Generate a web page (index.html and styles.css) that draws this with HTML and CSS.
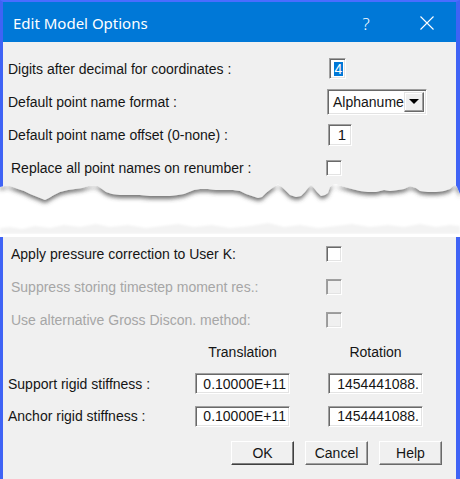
FILE: index.html
```html
<!DOCTYPE html>
<html lang="en">
  <head>
    <meta charset="UTF-8" />
    <title>Edit Model Options</title>
    <link rel="stylesheet" href="styles.css">
  </head>
  <body>
    <div class="frame frame-top">
      <div class="titlebar">
        <span class="title">Edit Model Options</span>
        <span class="help">?</span>
        <svg class="close" width="14" height="14" viewBox="0 0 14 14">
          <path d="M0.5 0.5L13.5 13.5M13.5 0.5L0.5 13.5" stroke="#fff" stroke-width="1.1" fill="none" />
        </svg>
      </div>

      <div class="body body-top">
        <div class="row">
          <span class="label">Digits after decimal for coordinates :</span>
          <span class="field digits"><span class="selected">4</span></span>
        </div>
        <div class="row">
          <span class="label">Default point name format :</span>
          <span class="field combo">
            <span class="combo-text">Alphanume</span>
            <span class="combo-btn"><span class="arrow"></span></span>
          </span>
        </div>
        <div class="row">
          <span class="label">Default point name offset (0-none) :</span>
          <span class="field offset">1</span>
        </div>
        <div class="row">
          <span class="label indent">Replace all point names on renumber :</span>
          <span class="check"></span>
        </div>
      </div>
    </div>

    <!-- torn paper gap -->
    <svg class="tear" width="460" height="50" viewBox="0 0 460 50">
      <defs>
        <clipPath id="topEdge">
          <path d="M0 0 H460 V10 L457 3 L455 0 L450 5 L444 7 L436 8 L428 8 L420 7 L416 4 L410 2 L404 5 L398 6 L390 7 L384 6 L376 8 L368 8 L360 7 L352 5 L345 3 L339 1 L336 0 L332 1 L330 3 L328 9 L325 11 L321 12 L317 8 L314 4 L311 0 L308 4 L305 8 L301 12 L296 13 L290 11 L286 7 L282 3 L278 0 L275 2 L271 5 L266 9 L262 13 L258 14 L252 12 L246 10 L240 7 L233 6 L225 6 L216 6 L208 5 L200 5 L194 6 L189 8 L184 10 L178 11 L170 12 L160 12 L150 12 L140 11 L130 11 L120 11 L112 10 L106 8 L102 5 L98 2 L94 1 L88 2 L82 4 L75 5 L68 6 L60 8 L54 11 L49 14 L45 16 L40 14 L35 12 L30 10 L24 7 L18 5 L13 3 L8 1 L4 2 L0 3 Z" />
        </clipPath>
        <filter id="shadow" x="-5%" y="-20%" width="110%" height="200%">
          <feDropShadow dx="0" dy="3" stdDeviation="2" flood-color="#444" flood-opacity="0.75" />
        </filter>
        <filter id="soft" x="-5%" y="-50%" width="110%" height="200%">
          <feGaussianBlur stdDeviation="1.2" />
        </filter>
      </defs>
      <g filter="url(#shadow)">
        <g clip-path="url(#topEdge)">
          <rect width="460" height="50" fill="#f0f0f0" />
          <rect width="3" height="50" fill="#3f63f5" />
          <rect x="456" width="4" height="50" fill="#3f63f5" />
        </g>
      </g>
      <path filter="url(#soft)" fill="#f3f3f3" d="M0 50 V44 L10 43 L22 45 L35 42 L50 44 L64 41 L80 43 L96 40 L110 43 L128 41 L146 44 L162 42 L178 40 L194 43 L212 41 L230 44 L250 42 L268 39 L284 43 L300 41 L318 44 L336 42 L352 40 L370 43 L388 41 L404 43 L420 40 L436 43 L450 41 L460 42 V50 Z" />
    </svg>

    <div class="frame frame-bottom">
      <div class="body">
        <div class="row">
          <span class="label indent">Apply pressure correction to User K:</span>
          <span class="check"></span>
        </div>
        <div class="row">
          <span class="label indent disabled">Suppress storing timestep moment res.:</span>
          <span class="check off"></span>
        </div>
        <div class="row">
          <span class="label indent disabled">Use alternative Gross Discon. method:</span>
          <span class="check off"></span>
        </div>

        <div class="grid head">
          <span></span>
          <span class="col-title">Translation</span>
          <span class="col-title">Rotation</span>
        </div>
        <div class="grid stiff">
          <span class="label">Support rigid stiffness :</span>
          <span class="field num">0.10000E+11</span>
          <span class="field num">1454441088.</span>
        </div>
        <div class="grid stiff last">
          <span class="label">Anchor rigid stiffness :</span>
          <span class="field num">0.10000E+11</span>
          <span class="field num">1454441088.</span>
        </div>

        <div class="buttons">
          <button class="btn default">OK</button>
          <button class="btn">Cancel</button>
          <button class="btn">Help</button>
        </div>
      </div>
    </div>
  </body>
</html>
```

FILE: styles.css
```css
body {
  margin: 0;
  background: #fff;
  font-family: "Liberation Sans", Arial, sans-serif;
  font-size: 14px;
  color: #151515;
}
.frame {
  width: 460px;
  box-sizing: border-box;
  background: #f0f0f0;
  border-left: 3px solid #3f63f5;
  border-right: 4px solid #3f63f5;
}
.frame-top {
  border-top: 2px solid #4a6cff;
}
.frame-bottom {
  border-bottom: 3px solid #3f63f5;
}

/* title bar */
.titlebar {
  height: 40px;
  background: #0078d7;
  color: #fff;
  display: flex;
  align-items: center;
  padding-top: 2px;
  box-sizing: border-box;
}
.title {
  font-family: "Noto Sans", "Open Sans", sans-serif;
  font-size: 15px;
  padding-left: 10px;
}
.help {
  font-family: "Noto Sans", sans-serif;
  font-size: 17px;
  font-weight: 300;
  width: 16px;
  text-align: center;
  margin-left: auto;
  margin-right: 46px;
}
.close {
  margin-right: 22px;
}

/* rows */
.body-top {
  padding-top: 10px;
}
.row {
  height: 33px;
  display: flex;
  align-items: center;
}
.label {
  width: 318px;
  padding-left: 5px;
  white-space: nowrap;
}
.label.indent {
  padding-left: 8px;
  width: 315px;
}
.disabled {
  color: #a6a6a6;
}

/* sunken controls */
.field {
  box-sizing: border-box;
  background: #fff;
  border: 1px solid;
  border-color: #a0a0a0 #fff #fff #a0a0a0;
  box-shadow: inset 1px 1px 0 #696969, inset -1px -1px 0 #e3e3e3;
  display: flex;
  align-items: center;
  overflow: hidden;
  white-space: nowrap;
}
.digits {
  width: 17px;
  height: 21px;
  margin-left: 3px;
  padding: 3px 2px 2px 4px;
}
.selected {
  background: #0078d7;
  color: #fff;
  height: 100%;
  width: 100%;
  display: flex;
  align-items: center;
  justify-content: center;
}
.combo {
  width: 100px;
  height: 26px;
  margin-left: 1px;
  padding: 2px;
}
.combo-text {
  flex: 1;
  padding-left: 3px;
}
.combo-btn {
  width: 21px;
  height: 20px;
  box-sizing: border-box;
  background: #f0f0f0;
  border: 1px solid;
  border-color: #e3e3e3 #696969 #696969 #e3e3e3;
  box-shadow: inset -1px -1px 0 #a0a0a0, inset 1px 1px 0 #fff;
  display: flex;
  align-items: center;
  justify-content: center;
}
.arrow {
  border-left: 5px solid transparent;
  border-right: 5px solid transparent;
  border-top: 5px solid #000;
}
.offset {
  width: 24px;
  height: 22px;
  margin-left: 2px;
  justify-content: flex-end;
  padding-right: 5px;
  font-size: 15px;
}
.check {
  box-sizing: border-box;
  width: 16px;
  height: 16px;
  background: #fff;
  border: 1px solid;
  border-color: #a0a0a0 #fff #fff #a0a0a0;
  box-shadow: inset 1px 1px 0 #696969, inset -1px -1px 0 #e3e3e3;
}
.check.off {
  background: #f0f0f0;
  box-shadow: inset 1px 1px 0 #9a9a9a, inset -1px -1px 0 #e3e3e3;
}

/* stiffness grid */
.grid {
  display: grid;
  grid-template-columns: 154px 95px 95px;
  column-gap: 38px;
  align-items: center;
}
.head {
  height: 31px;
}
.col-title {
  text-align: center;
}
.stiff {
  height: 33px;
}
.stiff.last {
  height: 32px;
}
.stiff .label {
  width: auto;
}
.num {
  height: 21px;
  justify-content: flex-end;
  padding-right: 3px;
}

/* buttons */
.buttons {
  display: flex;
  justify-content: flex-end;
  gap: 11px;
  padding: 9px 14px 14px 0;
}
.btn {
  width: 63px;
  height: 24px;
  font-family: "Liberation Sans", Arial, sans-serif;
  font-size: 14px;
  color: #151515;
  background: #f0f0f0;
  border: 1px solid;
  border-color: #fff #696969 #696969 #fff;
  box-shadow: inset -1px -1px 0 #a0a0a0;
  padding: 0;
}
.btn.default {
  border-color: #fff #404040 #404040 #fff;
  box-shadow: inset -1px -1px 0 #808080;
}
```
